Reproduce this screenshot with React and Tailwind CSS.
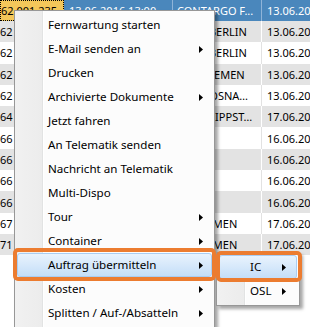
import React from 'react'

const rows = [
  { a: '62 001 236', b: '13.06.2016 13:00', c: 'HHLA BERLIN', d: '13.06.2016' },
  { a: '62 001 237', b: '13.06.2016 13:00', c: 'HHLA BERLIN', d: '13.06.2016' },
  { a: '62 001 238', b: '13.06.2016 14:00', c: 'CTB BREMEN', d: '13.06.2016' },
  { a: '62 001 239', b: '13.06.2016 14:00', c: 'RHEN OSNABRÜCK', d: '13.06.2016' },
  { a: '64 001 120', b: '17.06.2016 08:00', c: 'RHEN LIPPSTADT', d: '17.06.2016' },
  { a: '66 001 011', b: '16.06.2016 09:00', c: '', d: '16.06.2016' },
  { a: '66 001 012', b: '16.06.2016 09:00', c: '', d: '16.06.2016' },
  { a: '66 001 013', b: '16.06.2016 10:00', c: '', d: '16.06.2016' },
  { a: '66 001 014', b: '16.06.2016 10:00', c: '', d: '16.06.2016' },
  { a: '67 001 002', b: '17.06.2016 12:00', c: 'TC BREMEN', d: '17.06.2016' },
  { a: '71 001 005', b: '17.06.2016 12:00', c: 'TC BREMEN', d: '17.06.2016' },
]

const items = [
  { label: 'Fernwartung starten' },
  { label: 'E-Mail senden an', sub: true },
  { label: 'Drucken' },
  { label: 'Archivierte Dokumente', sub: true },
  { label: 'Jetzt fahren' },
  { label: 'An Telematik senden' },
  { label: 'Nachricht an Telematik' },
  { label: 'Multi-Dispo' },
  { label: 'Tour', sub: true },
  { label: 'Container', sub: true },
  { label: 'Auftrag übermitteln', sub: true, active: true },
  { label: 'Kosten', sub: true },
  { label: 'Splitten / Auf-/Absatteln', sub: true },
]

function Arrow() {
  return (
    <svg width="4" height="7" viewBox="0 0 4 7" className="shrink-0">
      <polygon points="0,0 4,3.5 0,7" fill="#000" />
    </svg>
  )
}

function MenuItem({ label, sub, active }) {
  return (
    <div className="relative flex h-[24px] items-center">
      {active && (
        <div className="absolute inset-y-0 left-[2px] right-[2px] rounded-[3px] border border-[#a9cdf2] bg-gradient-to-b from-[#e9f3fd] to-[#c4def8]" />
      )}
      <span className="relative flex-1 whitespace-nowrap pl-[33px] text-black">{label}</span>
      {sub && (
        <span className="relative mr-[11px]">
          <Arrow />
        </span>
      )}
    </div>
  )
}

const menuBg =
  'bg-[linear-gradient(to_right,#f1f1f1_0,#ececec_27px,#e2e3e3_27px,#e2e3e3_28px,#ffffff_28px,#ffffff_29px,#fcfcfc_29px)]'

export default function App() {
  return (
    <div
      className="relative h-[327px] w-[310px] overflow-hidden bg-white text-[11px] leading-none"
      style={{ fontFamily: '"Noto Sans", "DejaVu Sans", sans-serif' }}
    >
      {/* background grid */}
      <div className="flex h-[21px] bg-[#4a87bc] text-white">
        <div className="flex w-[64px] shrink-0 items-center overflow-hidden whitespace-nowrap border border-dotted border-black bg-[#f4c75a] text-black">
          62 001 235
        </div>
        <div className="flex w-[109px] shrink-0 items-center overflow-hidden whitespace-nowrap border-r border-[#8fb4d8] pl-[5px]">
          13.06.2016 13:00
        </div>
        <div className="flex w-[89px] shrink-0 items-center overflow-hidden whitespace-nowrap border-r border-[#8fb4d8] pl-[4px]">
          CONTARGO F...
        </div>
        <div className="flex flex-1 items-center overflow-hidden whitespace-nowrap pl-[5px]">13.06.2016</div>
      </div>
      {rows.map((r, i) => {
        const gray = i % 2 === 0
        const line = gray ? 'border-white' : 'border-[#e2e2e2]'
        return (
          <div key={i} className={`flex h-[21.3px] ${gray ? 'bg-[#e3e3e3]' : 'bg-white'}`}>
            <div className={`flex w-[65px] shrink-0 items-center overflow-hidden whitespace-nowrap border-r ${line}`}>{r.a}</div>
            <div className={`flex w-[108px] shrink-0 items-center overflow-hidden whitespace-nowrap border-r ${line} pl-[5px]`}>{r.b}</div>
            <div className={`flex w-[89px] shrink-0 items-center overflow-hidden border-r ${line} pl-[4px] pr-[6px]`}>
              <span className="truncate">{r.c}</span>
            </div>
            <div className="flex flex-1 items-center overflow-hidden whitespace-nowrap pl-[5px]">{r.d}</div>
          </div>
        )
      })}

      {/* context menu */}
      <div className={`absolute left-[14px] top-[10px] w-[201px] border border-[#979797] ${menuBg} py-[2px] text-[11.6px] shadow-[3px_3px_3px_rgba(0,0,0,0.35)]`}>
        {items.map((it) => (
          <MenuItem key={it.label} {...it} />
        ))}
      </div>

      {/* submenu */}
      <div className={`absolute left-[216px] top-[252px] w-[84px] border border-[#979797] ${menuBg} py-[2px] text-[11.6px] shadow-[3px_3px_3px_rgba(0,0,0,0.35)]`}>
        <div className="relative flex h-[24px] items-center">
          <div className="absolute inset-y-0 left-[2px] right-[2px] rounded-[3px] border border-[#a9cdf2] bg-gradient-to-b from-[#e9f3fd] to-[#c4def8]" />
          <span className="relative flex-1 pl-[33px]">IC</span>
          <span className="relative mr-[13px]"><Arrow /></span>
        </div>
        <div className="relative flex h-[24px] items-center">
          <span className="relative flex-1 pl-[33px]">OSL</span>
          <span className="relative mr-[13px]"><Arrow /></span>
        </div>
      </div>

      {/* annotation frames */}
      <div className="absolute left-[13px] top-[248px] h-[33px] w-[203px] rounded-[5px] border-4 border-[#ec7c30]" />
      <div className="absolute left-[216px] top-[251px] h-[31px] w-[86px] rounded-[5px] border-4 border-[#ec7c30]" />
    </div>
  )
}
